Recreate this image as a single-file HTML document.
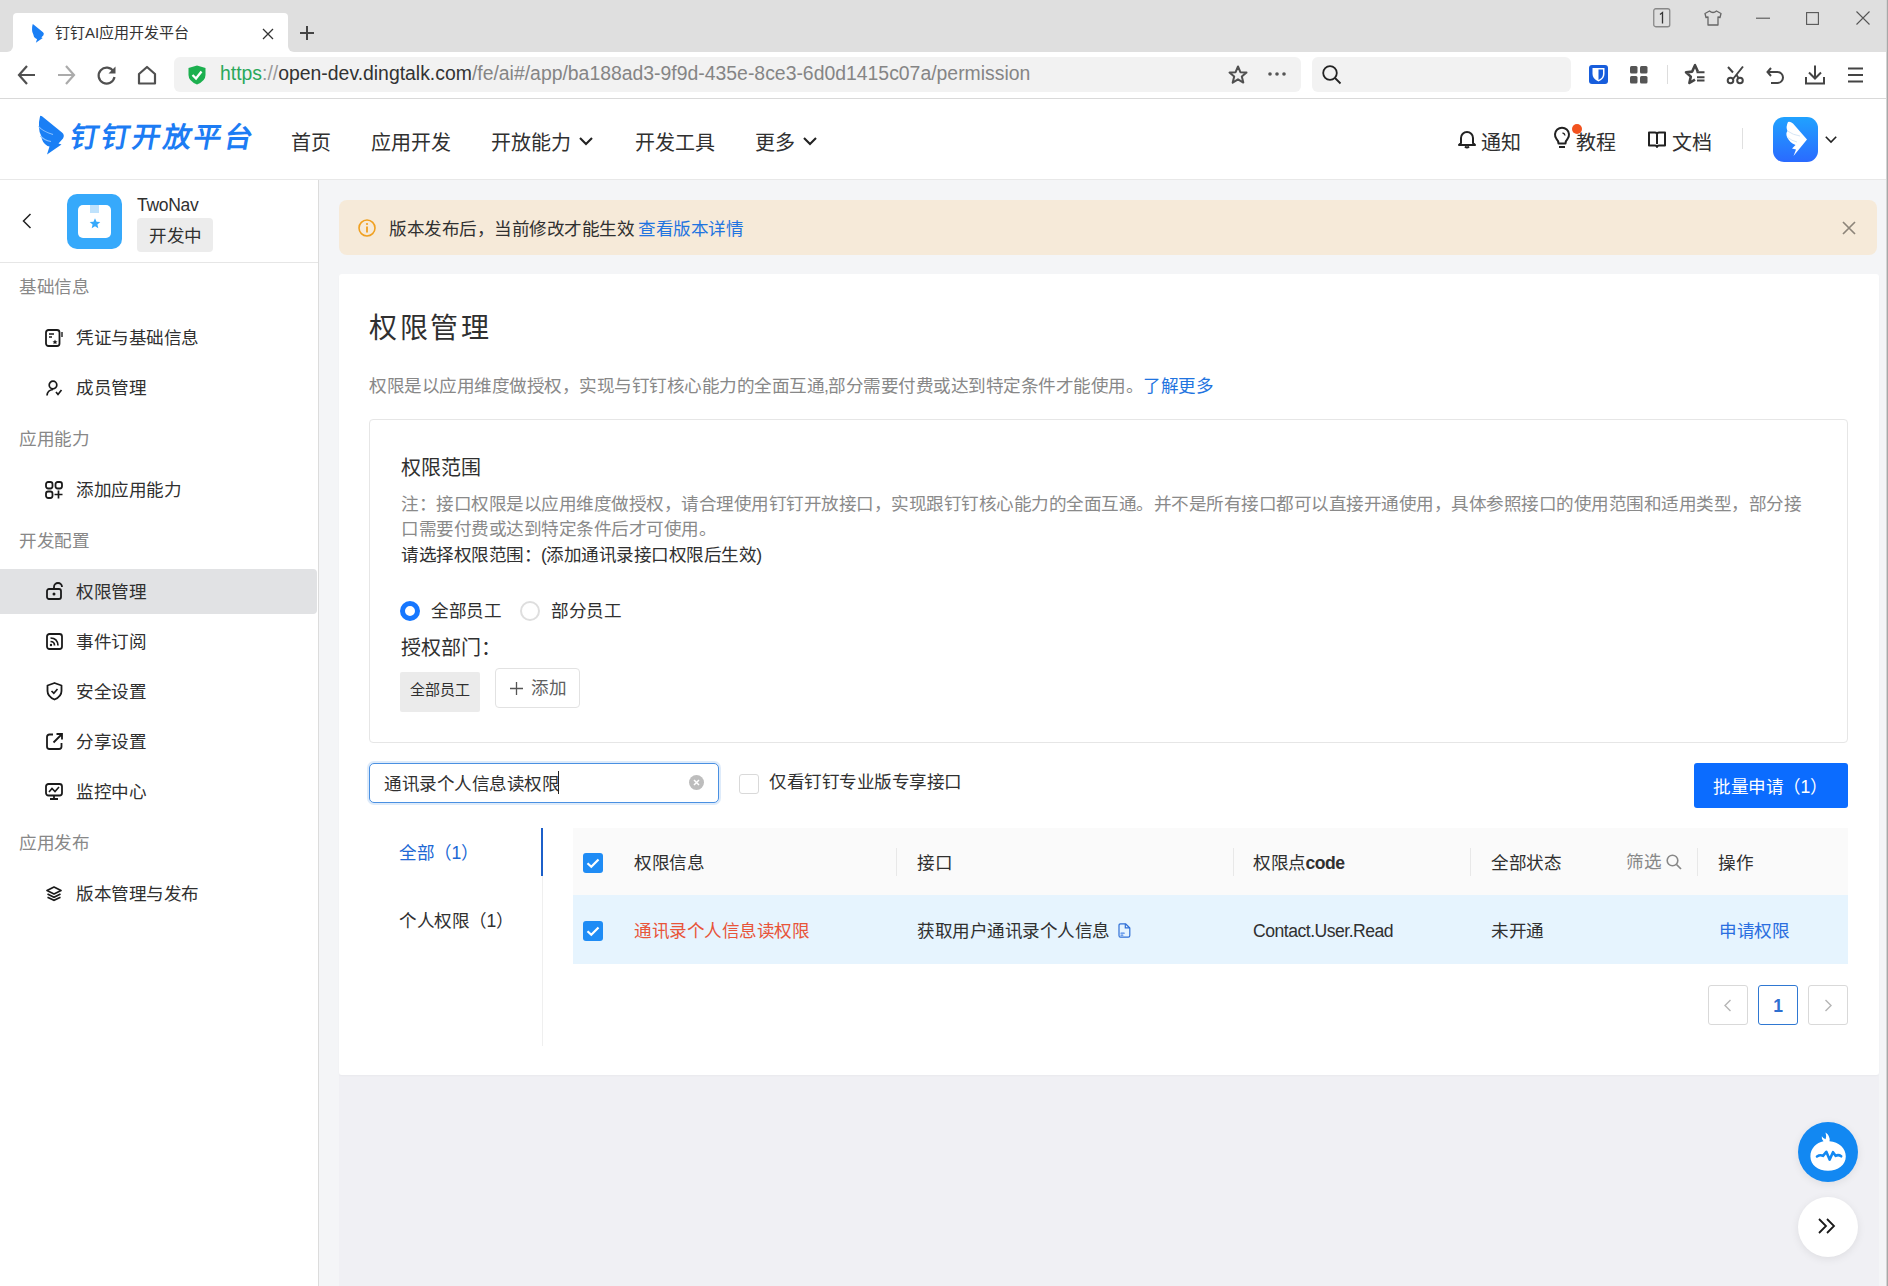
<!DOCTYPE html>
<html lang="zh-CN"><head><meta charset="utf-8">
<style>
*{box-sizing:border-box;margin:0;padding:0}
html,body{width:1888px;height:1286px;overflow:hidden;text-spacing-trim:space-all;background:#f4f5f7;font-family:"Liberation Sans",sans-serif;color:#303030}
.a{position:absolute;white-space:nowrap}
svg{position:absolute;overflow:visible}
/* chrome */
#tabbar{position:absolute;left:0;top:0;width:1888px;height:52px;background:#dfdfdf}
#tab{position:absolute;left:13px;top:13px;width:275px;height:40px;background:#fff;border-radius:4px 4px 0 0}
#toolbar{position:absolute;left:0;top:52px;width:1888px;height:47px;background:#fff;border-bottom:1px solid #d9d9d9}
#addr{position:absolute;left:174px;top:57px;width:1127px;height:35px;background:#f2f2f2;border-radius:6px}
#search{position:absolute;left:1312px;top:57px;width:259px;height:35px;background:#f2f2f2;border-radius:6px}
/* page header */
#hdr{position:absolute;left:0;top:99px;width:1887px;height:81px;background:#fff;border-bottom:1px solid #e8e8e8}
.nav{position:absolute;top:127.5px;font-size:20px;color:#303030;line-height:30px}
/* sidebar */
#side{position:absolute;left:0;top:180px;width:319px;height:1106px;background:#fff;border-right:1px solid #dcdcdc}
.sec{position:absolute;left:19px;font-size:17.6px;letter-spacing:-0.5px;color:#888;line-height:24px}
.item{position:absolute;left:76px;font-size:17.6px;letter-spacing:-0.5px;color:#303030;line-height:24px}
/* main */
#alert{position:absolute;left:339px;top:200px;width:1538px;height:55px;background:#f6ead9;border-radius:8px}
#card{position:absolute;left:339px;top:274px;width:1540px;height:801px;background:#fff;border-radius:3px;box-shadow:0 1px 2px rgba(0,0,0,0.03)}
#box{position:absolute;left:369px;top:419px;width:1479px;height:324px;border:1px solid #e6e6e6;border-radius:4px}
#winborder{position:absolute;left:1886px;top:0;width:2px;height:1286px;background:#a8a8a8;border-left:1px solid #d4d4d4}
.t{position:absolute;white-space:nowrap;line-height:24px}
</style></head><body>
<div id="tabbar"></div>
<div id="tab"></div>
<div class="a" style="left:288px;top:46px;width:6px;height:6px;background:#fff"></div><div class="a" style="left:288px;top:46px;width:6px;height:6px;background:#dfdfdf;border-bottom-left-radius:6px"></div>
<div class="a" style="left:7px;top:46px;width:6px;height:6px;background:#fff"></div><div class="a" style="left:7px;top:46px;width:6px;height:6px;background:#dfdfdf;border-bottom-right-radius:6px"></div>
<!-- favicon -->
<svg style="left:31px;top:24px" width="14" height="19" viewBox="0 0 27 40"><path d="M2 1.5C2 0.5 3 0.5 4 1.2L24 17.5Q27 20 25 23.5L20.5 28.5L23.5 29.5L9 39.5L11.5 31.5L9.5 31Q3.5 27 3.5 21.5Q1 17.5 1 12.5Q0.5 7 2 1.5Z" fill="#1a7ff5"/></svg>
<div class="t" style="left:55px;top:21px;font-size:15px;color:#333">钉钉AI应用开发平台</div>
<svg style="left:262px;top:28px" width="12" height="12" viewBox="0 0 12 12"><path d="M1 1L11 11M11 1L1 11" stroke="#333" stroke-width="1.3"/></svg>
<svg style="left:299px;top:25px" width="16" height="16" viewBox="0 0 16 16"><path d="M8 1V15M1 8H15" stroke="#444" stroke-width="2"/></svg>
<!-- window controls -->
<svg style="left:1653px;top:8px" width="18" height="20" viewBox="0 0 18 20"><rect x="0.75" y="0.75" width="16" height="18" rx="2" fill="none" stroke="#888" stroke-width="1.3"/><path d="M7 6.5L9.5 4.5V15.5" stroke="#333" stroke-width="1.3" fill="none"/></svg>
<svg style="left:1704px;top:10px" width="18" height="16" viewBox="0 0 18 16"><path d="M5.5 1L1 3.5L2 7.5L4 7V15H14V7L16 7.5L17 3.5L12.5 1Q9 4 5.5 1Z" fill="none" stroke="#666" stroke-width="1.3" stroke-linejoin="round"/></svg>
<svg style="left:1756px;top:17px" width="14" height="3" viewBox="0 0 14 3"><path d="M0 1.2H14" stroke="#555" stroke-width="1.1"/></svg>
<svg style="left:1806px;top:12px" width="13" height="13" viewBox="0 0 13 13"><rect x="0.6" y="0.6" width="11.8" height="11.8" fill="none" stroke="#555" stroke-width="1.1"/></svg>
<svg style="left:1856px;top:11px" width="14" height="14" viewBox="0 0 14 14"><path d="M0.5 0.5L13.5 13.5M13.5 0.5L0.5 13.5" stroke="#555" stroke-width="1.1"/></svg>
<div id="toolbar"></div>
<!-- nav buttons -->
<svg style="left:18px;top:65px" width="18" height="20" viewBox="0 0 18 20"><path d="M9 1L1 10L9 19M1 10H17" fill="none" stroke="#505050" stroke-width="2.2"/></svg>
<svg style="left:57px;top:65px" width="18" height="20" viewBox="0 0 18 20"><path d="M9 1L17 10L9 19M17 10H1" fill="none" stroke="#ababab" stroke-width="2.2"/></svg>
<svg style="left:97px;top:65px" width="20" height="20" viewBox="0 0 20 20"><path d="M16.5 6.5A8 8 0 1 0 17.5 12" fill="none" stroke="#505050" stroke-width="2.2"/><path d="M18.5 1.5V8.5H11.5Z" fill="#505050"/></svg>
<svg style="left:137px;top:65px" width="20" height="20" viewBox="0 0 20 20"><path d="M2 9L10 2L18 9V18.5H2Z" fill="none" stroke="#505050" stroke-width="2.2" stroke-linejoin="round"/></svg>
<div id="addr"></div>
<svg style="left:188px;top:65px" width="18" height="20" viewBox="0 0 18 20"><path d="M9 0.5L17.5 3V10Q17.5 16 9 19.5Q0.5 16 0.5 10V3Z" fill="#1cb04f"/><path d="M4.5 10L8 13.5L13.5 6.5" fill="none" stroke="#fff" stroke-width="2.3"/></svg>
<div class="t" style="left:220px;top:61px;font-size:19.4px;color:#1f1f1f"><span style="color:#2aa85a">https</span><span style="color:#999">://</span><span style="color:#333">open-dev.dingtalk.com</span><span style="color:#858585">/fe/ai#/app/ba188ad3-9f9d-435e-8ce3-6d0d1415c07a/permission</span></div>
<svg style="left:1228px;top:65px" width="20" height="20" viewBox="0 0 20 20"><path d="M10 1.5L12.4 7.2L18.5 7.6L13.8 11.6L15.3 17.6L10 14.3L4.7 17.6L6.2 11.6L1.5 7.6L7.6 7.2Z" fill="none" stroke="#505050" stroke-width="2" stroke-linejoin="round"/></svg>
<svg style="left:1268px;top:72px" width="18" height="4" viewBox="0 0 18 4"><circle cx="2" cy="2" r="1.8" fill="#555"/><circle cx="9" cy="2" r="1.8" fill="#555"/><circle cx="16" cy="2" r="1.8" fill="#555"/></svg>
<div id="search"></div>
<svg style="left:1322px;top:65px" width="20" height="20" viewBox="0 0 20 20"><circle cx="8" cy="8" r="6.8" fill="none" stroke="#222" stroke-width="1.8"/><path d="M13 13L18.5 18.5" stroke="#222" stroke-width="1.8"/></svg>
<svg style="left:1589px;top:65px" width="19" height="19" viewBox="0 0 19 19"><rect x="0" y="0" width="19" height="19" rx="3" fill="#175ddc"/><path d="M3.5 3H15.5V9Q15.5 14 9.5 16.5Q3.5 14 3.5 9Z" fill="#fff"/><path d="M9.5 4.5H14V9Q14 12.8 9.5 15Z" fill="#175ddc"/></svg>
<svg style="left:1630px;top:66px" width="18" height="18" viewBox="0 0 18 18"><rect x="0" y="0" width="7.5" height="7.5" rx="1.5" fill="#555"/><rect x="10" y="0" width="7.5" height="7.5" rx="1.5" fill="#555"/><rect x="0" y="10" width="7.5" height="7.5" rx="1.5" fill="#555"/><rect x="10" y="10" width="7.5" height="7.5" rx="1.5" fill="#555"/></svg>
<div class="a" style="left:1667px;top:65px;width:1px;height:19px;background:#ddd"></div>
<svg style="left:1685px;top:64px" width="20" height="20" viewBox="0 0 20 20"><path d="M12.8 7.6L10 1.2L7.2 7.6L1 8.2L5.8 12.6L4.4 19L10 15.6" fill="none" stroke="#444" stroke-width="2.6" stroke-linejoin="round"/><path d="M11.5 8.2H19.5M12 13.2H19.5M12 16.5H19.5" stroke="#444" stroke-width="2"/></svg>
<svg style="left:1726px;top:65px" width="18" height="20" viewBox="0 0 18 20"><path d="M2 2L7 7.5M17 1.5L7 14" stroke="#444" stroke-width="2"/><circle cx="4.5" cy="15.5" r="2.8" fill="none" stroke="#444" stroke-width="2"/><circle cx="14" cy="15.5" r="2.8" fill="none" stroke="#444" stroke-width="2"/><path d="M10.5 10L12.5 13" stroke="#444" stroke-width="2"/></svg>
<svg style="left:1766px;top:66px" width="18" height="18" viewBox="0 0 18 18"><path d="M5 2L1.5 6L5 10" fill="none" stroke="#444" stroke-width="2"/><path d="M1.5 6H11.5A5.5 5.5 0 0 1 11.5 17H5" fill="none" stroke="#444" stroke-width="2"/></svg>
<svg style="left:1805px;top:65px" width="20" height="20" viewBox="0 0 20 20"><path d="M10 0.5V13M4 7.5L10 13.5L16 7.5" fill="none" stroke="#444" stroke-width="2"/><path d="M1 12V18.5H19V12" fill="none" stroke="#444" stroke-width="2"/></svg>
<svg style="left:1848px;top:67px" width="15" height="16" viewBox="0 0 15 16"><path d="M0 1.5H15M0 8H15M0 14.5H15" stroke="#444" stroke-width="2"/></svg>
<div id="hdr"></div>
<div id="side"></div>
<div id="alert"></div>
<div class="a" style="left:339px;top:1075px;width:1540px;height:211px;background:#f0f0f4"></div>
<div id="card"></div>
<div id="box"></div>

<!-- HEADER -->
<svg style="left:38px;top:115px" width="27" height="40" viewBox="0 0 27 40"><path d="M2 1.5C2 0.5 3 0.5 4 1.2L24 17.5Q27 20 25 23.5L20.5 28.5L23.5 29.5L9 39.5L11.5 31.5L9.5 31Q3.5 27 3.5 21.5Q1 17.5 1 12.5Q0.5 7 2 1.5Z" fill="#1a7ff5"/><path d="M0.5 11.5Q5 16.5 15 19.5M2.3 20.8Q6 25 13 26.5" fill="none" stroke="#8cc2ff" stroke-width="1.1"/></svg>
<div class="t" style="left:68px;top:122px;font-size:28px;letter-spacing:2.8px;line-height:32px;color:#1c7cf4;font-weight:bold;transform:skewX(-10deg);transform-origin:0 100%">钉钉开放平台</div>
<div class="nav" style="left:291px">首页</div>
<div class="nav" style="left:371px">应用开发</div>
<div class="nav" style="left:491px">开放能力</div>
<svg style="left:579px;top:137px" width="14" height="8" viewBox="0 0 14 8"><path d="M1 1L7 7L13 1" fill="none" stroke="#222" stroke-width="2.1"/></svg>
<div class="nav" style="left:635px">开发工具</div>
<div class="nav" style="left:755px">更多</div>
<svg style="left:803px;top:137px" width="14" height="8" viewBox="0 0 14 8"><path d="M1 1L7 7L13 1" fill="none" stroke="#222" stroke-width="2.1"/></svg>
<svg style="left:1458px;top:130px" width="18" height="18" viewBox="0 0 18 18"><path d="M3 13V8A6 6 0 0 1 15 8V13L17 15H1Z" fill="none" stroke="#222" stroke-width="2" stroke-linejoin="round"/><path d="M7 16.5Q9 18.5 11 16.5" fill="none" stroke="#222" stroke-width="2"/></svg>
<div class="nav" style="left:1481px">通知</div>
<svg style="left:1554px;top:129px" width="16" height="20" viewBox="0 0 16 20"><path d="M4.5 14.5Q4.5 12 2.5 10A7 7 0 1 1 13.5 10Q11.5 12 11.5 14.5Z" fill="none" stroke="#222" stroke-width="2" stroke-linejoin="round"/><path d="M5 18H11" stroke="#222" stroke-width="2"/><path d="M8.5 4A3 3 0 0 1 11 6.5" fill="none" stroke="#222" stroke-width="1.4"/></svg>
<div class="nav" style="left:1576px">教程</div>
<div class="a" style="left:1572px;top:124px;width:10px;height:10px;border-radius:50%;background:#f2521e"></div>
<svg style="left:1648px;top:131px" width="18" height="17" viewBox="0 0 18 17"><path d="M1 1.5H7Q9 1.5 9 3.5Q9 1.5 11 1.5H17V14.5H11Q9 14.5 9 16Q9 14.5 7 14.5H1Z" fill="none" stroke="#222" stroke-width="2" stroke-linejoin="round"/><path d="M9 4V13" stroke="#222" stroke-width="2"/></svg>
<div class="nav" style="left:1672px">文档</div>
<div class="a" style="left:1742px;top:128px;width:1px;height:21px;background:#e0e0e0"></div>
<div class="a" style="left:1773px;top:117px;width:45px;height:45px;border-radius:11px;background:linear-gradient(#20a2ff,#2a6aff)"></div>
<svg style="left:1785px;top:121px" width="24" height="36" viewBox="0 0 24 36"><path d="M3 1Q5 0 8 2.5L22 18.5L8.5 35L11 28.5L7 27.5L10.5 24Q4 21 2 16Q0.5 12 2.5 10Q0.5 6 3 1Z" fill="#fff"/><path d="M2.5 10Q8 14 15 15M2 16Q7 20 12 21" fill="none" stroke="#d6e6f5" stroke-width="1"/></svg>
<svg style="left:1825px;top:136px" width="12" height="7" viewBox="0 0 12 7"><path d="M0.8 0.8L6 6L11.2 0.8" fill="none" stroke="#222" stroke-width="1.6"/></svg>

<!-- SIDEBAR -->
<svg style="left:22px;top:213px" width="10" height="16" viewBox="0 0 10 16"><path d="M8.5 1L1.5 8L8.5 15" fill="none" stroke="#222" stroke-width="1.5"/></svg>
<div class="a" style="left:67px;top:194px;width:55px;height:55px;border-radius:10px;background:#36a9fb"></div>
<div class="a" style="left:78px;top:205px;width:33px;height:33px;border-radius:5px;background:#fff"></div>
<div class="a" style="left:90px;top:205px;width:9px;height:8px;background:#bfe2fc"></div>
<svg style="left:88.5px;top:217.5px" width="12" height="11" viewBox="0 0 16 15"><path d="M8 0.5L10.1 5.2L15.2 5.6L11.3 8.9L12.5 14L8 11.3L3.5 14L4.7 8.9L0.8 5.6L5.9 5.2Z" fill="#36a9fb"/></svg>
<div class="t" style="left:137px;top:193px;font-size:17.5px;letter-spacing:-0.3px;color:#303030">TwoNav</div>
<div class="a" style="left:137px;top:218px;width:76px;height:34px;border-radius:4px;background:#ececec"></div>
<div class="t" style="left:149px;top:224px;font-size:17.6px;letter-spacing:-0.5px;color:#303030">开发中</div>
<div class="a" style="left:0;top:262px;width:318px;height:1px;background:#e6e6e6"></div>
<div class="sec" style="top:275px">基础信息</div>
<div class="item" style="top:326px">凭证与基础信息</div>
<div class="item" style="top:376px">成员管理</div>
<div class="sec" style="top:427px">应用能力</div>
<div class="item" style="top:478px">添加应用能力</div>
<div class="sec" style="top:529px">开发配置</div>
<div class="a" style="left:0;top:569px;width:317px;height:45px;background:#e1e2e4;border-radius:0 4px 4px 0"></div>
<div class="item" style="top:580px">权限管理</div>
<div class="item" style="top:630px">事件订阅</div>
<div class="item" style="top:680px">安全设置</div>
<div class="item" style="top:730px">分享设置</div>
<div class="item" style="top:780px">监控中心</div>
<div class="sec" style="top:831px">应用发布</div>
<div class="item" style="top:882px">版本管理与发布</div>
<!-- sidebar icons -->
<svg style="left:45px;top:329px" width="18" height="18" viewBox="0 0 18 18"><rect x="1" y="1" width="13.5" height="16" rx="2.5" fill="none" stroke="#1a1a1a" stroke-width="1.8"/><path d="M4 5H9M4 8H7" stroke="#1a1a1a" stroke-width="1.6"/><path d="M10 10.5L10.8 12.2L12.5 12.4L11.2 13.5L11.6 15.2L10 14.3L8.4 15.2L8.8 13.5L7.5 12.4L9.2 12.2Z" fill="#1a1a1a"/><path d="M17 3V8" stroke="#1a1a1a" stroke-width="1.4"/></svg>
<svg style="left:46px;top:380px" width="17" height="16" viewBox="0 0 17 16"><circle cx="7" cy="5" r="3.8" fill="none" stroke="#1a1a1a" stroke-width="1.7"/><path d="M1 15.5Q1.5 10 7 9.5" fill="none" stroke="#1a1a1a" stroke-width="1.7"/><path d="M10 12L12 14.5L15.5 10" fill="none" stroke="#1a1a1a" stroke-width="1.7"/></svg>
<svg style="left:45px;top:481px" width="18" height="18" viewBox="0 0 18 18"><rect x="1" y="1" width="6.5" height="6.5" rx="2.2" fill="none" stroke="#1a1a1a" stroke-width="1.8"/><rect x="10.5" y="1" width="6.5" height="6.5" rx="2.2" fill="none" stroke="#1a1a1a" stroke-width="1.8"/><rect x="1" y="10.5" width="6.5" height="6.5" rx="2.2" fill="none" stroke="#1a1a1a" stroke-width="1.8"/><path d="M13.5 9.5V17.5M9.5 13.5H17.5" stroke="#1a1a1a" stroke-width="1.7"/></svg>
<svg style="left:46px;top:582px" width="18" height="18" viewBox="0 0 18 18"><rect x="1" y="7" width="14" height="10" rx="2" fill="none" stroke="#1a1a1a" stroke-width="1.8"/><path d="M8 7V5A4 4 0 0 1 16 5" fill="none" stroke="#1a1a1a" stroke-width="1.8"/><circle cx="8" cy="12" r="1.5" fill="#1a1a1a"/></svg>
<svg style="left:46px;top:633px" width="17" height="17" viewBox="0 0 17 17"><rect x="1" y="1" width="15" height="15" rx="2.5" fill="none" stroke="#1a1a1a" stroke-width="1.8"/><path d="M4.5 5Q11.5 5 12 12.5M4.5 8.5Q8.5 8.5 8.5 12.5" fill="none" stroke="#1a1a1a" stroke-width="1.7"/><circle cx="5" cy="12" r="1.2" fill="#1a1a1a"/></svg>
<svg style="left:46px;top:682px" width="17" height="19" viewBox="0 0 17 19"><path d="M8.5 1L15.5 3.5V9Q15.5 14.5 8.5 17.5Q1.5 14.5 1.5 9V3.5Z" fill="none" stroke="#1a1a1a" stroke-width="1.8" stroke-linejoin="round"/><path d="M5.5 9L7.8 11.2L11.5 7" fill="none" stroke="#1a1a1a" stroke-width="1.7"/></svg>
<svg style="left:46px;top:733px" width="17" height="17" viewBox="0 0 17 17"><path d="M7 1.5H3.5Q1 1.5 1 4V13.5Q1 16 3.5 16H13Q15.5 16 15.5 13.5V10" fill="none" stroke="#1a1a1a" stroke-width="1.8"/><path d="M7.5 9.5L15.5 1.5M10.5 1H16V6.5" fill="none" stroke="#1a1a1a" stroke-width="1.8"/></svg>
<svg style="left:45px;top:783px" width="18" height="17" viewBox="0 0 18 17"><rect x="1" y="1" width="16" height="11.5" rx="2.5" fill="none" stroke="#1a1a1a" stroke-width="1.8"/><path d="M4 9L7 5.5L10 8.5L14 4" fill="none" stroke="#1a1a1a" stroke-width="1.6"/><path d="M9 12.5V15.5M5 16H13" stroke="#1a1a1a" stroke-width="1.8"/></svg>
<svg style="left:46px;top:886px" width="16" height="15" viewBox="0 0 16 15"><path d="M8 1L15 4.5L8 8L1 4.5Z" fill="none" stroke="#1a1a1a" stroke-width="1.7" stroke-linejoin="round"/><path d="M1.5 8L8 11.2L14.5 8M1.5 11.2L8 14.2L14.5 11.2" fill="none" stroke="#1a1a1a" stroke-width="1.7"/></svg>

<!-- ALERT -->
<svg style="left:358px;top:219px" width="18" height="18" viewBox="0 0 18 18"><circle cx="9" cy="9" r="8" fill="none" stroke="#f0a020" stroke-width="1.6"/><path d="M9 7.5V13.5" stroke="#f0a020" stroke-width="1.8"/><circle cx="9" cy="5" r="1.1" fill="#f0a020"/></svg>
<div class="t" style="left:389px;top:217px;font-size:17.6px;letter-spacing:-0.5px;color:#303030">版本发布后，当前修改才能生效 <span style="color:#1f74e0">查看版本详情</span></div>
<svg style="left:1842px;top:221px" width="14" height="14" viewBox="0 0 14 14"><path d="M1 1L13 13M13 1L1 13" stroke="#8d857a" stroke-width="1.7"/></svg>

<!-- CARD -->
<div class="t" style="left:369px;top:311px;font-size:28px;line-height:36px;color:#303030;letter-spacing:2.5px;font-weight:300">权限管理</div>
<div class="t" style="left:369px;top:374px;font-size:17.6px;letter-spacing:-0.5px;color:#888">权限是以应用维度做授权，实现与钉钉核心能力的全面互通,部分需要付费或达到特定条件才能使用。<span style="color:#1f74e0">了解更多</span></div>

<div class="t" style="left:401px;top:456px;font-size:20px;color:#303030">权限范围</div>
<div class="t" style="left:401px;top:492px;font-size:17.6px;letter-spacing:-0.5px;line-height:25px;color:#8a8a8a">注：接口权限是以应用维度做授权，请合理使用钉钉开放接口，实现跟钉钉核心能力的全面互通。并不是所有接口都可以直接开通使用，具体参照接口的使用范围和适用类型，部分接<br>口需要付费或达到特定条件后才可使用。</div>
<div class="t" style="left:401px;top:543px;font-size:17.6px;letter-spacing:-0.5px;color:#303030">请选择权限范围：(添加通讯录接口权限后生效)</div>

<div class="a" style="left:400px;top:601px;width:20px;height:20px;border-radius:50%;border:5.5px solid #1677ff;background:#fff"></div>
<div class="t" style="left:431px;top:599px;font-size:17.6px;letter-spacing:-0.5px;color:#303030">全部员工</div>
<div class="a" style="left:520px;top:601px;width:20px;height:20px;border-radius:50%;border:2px solid #dedede;background:#fff"></div>
<div class="t" style="left:551px;top:599px;font-size:17.6px;letter-spacing:-0.5px;color:#303030">部分员工</div>
<div class="t" style="left:401px;top:636px;font-size:20px;color:#303030">授权部门：</div>
<div class="a" style="left:400px;top:672px;width:80px;height:40px;border-radius:2px;background:#ebebeb"></div>
<div class="t" style="left:410px;top:678px;font-size:15px;color:#303030">全部员工</div>
<div class="a" style="left:495px;top:668px;width:85px;height:40px;border-radius:4px;border:1px solid #e2e2e2;background:#fff"></div>
<svg style="left:510px;top:682px" width="13" height="13" viewBox="0 0 13 13"><path d="M6.5 0V13M0 6.5H13" stroke="#555" stroke-width="1.3"/></svg>
<div class="t" style="left:531px;top:676px;font-size:17.6px;letter-spacing:-0.5px;color:#606060">添加</div>

<!-- SEARCH ROW -->
<div class="a" style="left:369px;top:763px;width:350px;height:40px;border-radius:5px;border:1.5px solid #4a90e2;box-shadow:0 0 0 2px rgba(74,144,226,0.18);background:#fff"></div>
<div class="t" style="left:384px;top:772px;font-size:17.6px;letter-spacing:-0.5px;color:#303030">通讯录个人信息读权限</div>
<div class="a" style="left:558px;top:771px;width:1px;height:23px;background:#222"></div>
<svg style="left:689px;top:775px" width="15" height="15" viewBox="0 0 15 15"><circle cx="7.5" cy="7.5" r="7.5" fill="#bdbdbd"/><path d="M5 5L10 10M10 5L5 10" stroke="#fff" stroke-width="1.5"/></svg>
<div class="a" style="left:739px;top:774px;width:20px;height:20px;border-radius:3px;border:1px solid #d9d9d9;background:#fff"></div>
<div class="t" style="left:769px;top:770px;font-size:17.6px;letter-spacing:-0.5px;color:#303030">仅看钉钉专业版专享接口</div>
<div class="a" style="left:1694px;top:763px;width:154px;height:45px;border-radius:3px;background:#0b6cff"></div>
<div class="t" style="left:1713px;top:775px;font-size:17.6px;letter-spacing:-0.5px;color:#fff;font-weight:500">批量申请（1）</div>

<!-- TABS -->
<div class="t" style="left:399px;top:841px;font-size:17.6px;letter-spacing:-0.5px;color:#2068d4">全部（1）</div>
<div class="t" style="left:399px;top:908.5px;font-size:17.6px;letter-spacing:-0.5px;color:#303030">个人权限（1）</div>
<div class="a" style="left:542px;top:828px;width:1px;height:218px;background:#efefef"></div>
<div class="a" style="left:541px;top:828px;width:2px;height:48px;background:#1c5fc9"></div>

<!-- TABLE -->
<div class="a" style="left:573px;top:828px;width:1275px;height:67px;background:#fafafa"></div>
<div class="a" style="left:573px;top:895px;width:1275px;height:69px;background:#e6f4fe"></div>
<div class="a" style="left:896px;top:848px;width:1px;height:28px;background:#e8e8e8"></div>
<div class="a" style="left:1233px;top:848px;width:1px;height:28px;background:#e8e8e8"></div>
<div class="a" style="left:1470px;top:848px;width:1px;height:28px;background:#e8e8e8"></div>
<div class="a" style="left:1697px;top:848px;width:1px;height:28px;background:#e8e8e8"></div>
<svg style="left:583px;top:853px" width="20" height="20" viewBox="0 0 20 20"><rect width="20" height="20" rx="3" fill="#1f8cf5"/><path d="M4.5 10.2L8.3 13.8L15.5 6.5" fill="none" stroke="#fff" stroke-width="2.2"/></svg>
<svg style="left:583px;top:921px" width="20" height="20" viewBox="0 0 20 20"><rect width="20" height="20" rx="3" fill="#1f8cf5"/><path d="M4.5 10.2L8.3 13.8L15.5 6.5" fill="none" stroke="#fff" stroke-width="2.2"/></svg>
<div class="t" style="left:634px;top:851px;font-size:17.6px;letter-spacing:-0.5px;color:#303030">权限信息</div>
<div class="t" style="left:917px;top:851px;font-size:17.6px;letter-spacing:-0.5px;color:#303030">接口</div>
<div class="t" style="left:1253px;top:851px;font-size:17.6px;letter-spacing:-0.5px;color:#303030">权限点<b style="font-weight:bold">code</b></div>
<div class="t" style="left:1491px;top:851px;font-size:17.6px;letter-spacing:-0.5px;color:#303030">全部状态</div>
<div class="t" style="left:1626px;top:850px;font-size:17.6px;letter-spacing:-0.5px;color:#888">筛选</div>
<svg style="left:1666px;top:854px" width="16" height="16" viewBox="0 0 16 16"><circle cx="6.5" cy="6.5" r="5.3" fill="none" stroke="#888" stroke-width="1.6"/><path d="M10.5 10.5L15 15" stroke="#888" stroke-width="1.7"/></svg>
<div class="t" style="left:1718px;top:851px;font-size:17.6px;letter-spacing:-0.5px;color:#303030">操作</div>

<div class="t" style="left:634px;top:919px;font-size:17.6px;letter-spacing:-0.5px;color:#e8553a">通讯录个人信息读权限</div>
<div class="t" style="left:917px;top:919px;font-size:17.6px;letter-spacing:-0.5px;color:#303030">获取用户通讯录个人信息</div>
<svg style="left:1118px;top:923px" width="13" height="15" viewBox="0 0 13 15"><path d="M1 2.5Q1 0.8 2.5 0.8H7.5L11.8 5V12.5Q11.8 14.2 10.3 14.2H2.5Q1 14.2 1 12.5Z" fill="none" stroke="#2f6fd6" stroke-width="1.2" stroke-linejoin="round"/><path d="M7.3 1V4.8H11.5" fill="none" stroke="#2f6fd6" stroke-width="1.2"/><path d="M3 10.2H6.2M3 12.2H4.8" stroke="#4a86e8" stroke-width="1.2" stroke-linecap="round"/></svg>
<div class="t" style="left:1253px;top:919px;font-size:17.6px;letter-spacing:-0.5px;color:#303030">Contact.User.Read</div>
<div class="t" style="left:1491px;top:919px;font-size:17.6px;letter-spacing:-0.5px;color:#303030">未开通</div>
<div class="t" style="left:1719px;top:919px;font-size:17.6px;letter-spacing:-0.5px;color:#2a6ee0">申请权限</div>

<!-- PAGINATION -->
<div class="a" style="left:1708px;top:985px;width:40px;height:40px;border:1px solid #d9d9d9;border-radius:3px;background:#fff"></div>
<svg style="left:1723px;top:999px" width="9" height="13" viewBox="0 0 9 13"><path d="M7.5 1L2 6.5L7.5 12" fill="none" stroke="#b5b5b5" stroke-width="1.4"/></svg>
<div class="a" style="left:1758px;top:985px;width:40px;height:40px;border:1.5px solid #2f78d2;border-radius:3px;background:#fff"></div>
<div class="t" style="left:1758px;top:994px;width:40px;text-align:center;font-size:17.5px;font-weight:bold;color:#2f6fd0">1</div>
<div class="a" style="left:1808px;top:985px;width:40px;height:40px;border:1px solid #d9d9d9;border-radius:3px;background:#fff"></div>
<svg style="left:1824px;top:999px" width="9" height="13" viewBox="0 0 9 13"><path d="M1.5 1L7 6.5L1.5 12" fill="none" stroke="#b5b5b5" stroke-width="1.4"/></svg>

<!-- FLOATING -->
<div class="a" style="left:1798px;top:1122px;width:60px;height:60px;border-radius:50%;background:#1288f2;box-shadow:0 2px 8px rgba(0,0,0,0.08)"></div>
<svg style="left:1808px;top:1130px" width="40" height="44" viewBox="0 0 40 44"><path d="M17.5 2.5Q22.5 6 21.5 11.2C31 11.8 37.8 18.5 37.8 26.5C37.8 35 30 40.8 20 40.8C10 40.8 2.4 35 2.4 26.5C2.4 18.5 8.5 12.5 15.5 11.3Q13.2 8.5 13.8 6.2Q15.5 8.8 17.6 9.3Q18.8 6 17.5 2.5Z" fill="#fff"/><path d="M9 26.5Q12 24.5 15 25.8L18.3 21.8L21.6 29.6L25 22.2L27.6 25.8Q30.5 24.3 33.2 26.3" fill="none" stroke="#1288f2" stroke-width="2.6" stroke-linejoin="round" stroke-linecap="round"/></svg>
<div class="a" style="left:1798px;top:1197px;width:60px;height:60px;border-radius:50%;background:#fff;box-shadow:0 2px 8px rgba(0,0,0,0.08)"></div>
<svg style="left:1818px;top:1218px" width="19" height="16" viewBox="0 0 19 16"><path d="M1 1L8 8L1 15M9 1L16 8L9 15" fill="none" stroke="#1a1a1a" stroke-width="1.8"/></svg>
<div id="winborder"></div>
</body></html>
